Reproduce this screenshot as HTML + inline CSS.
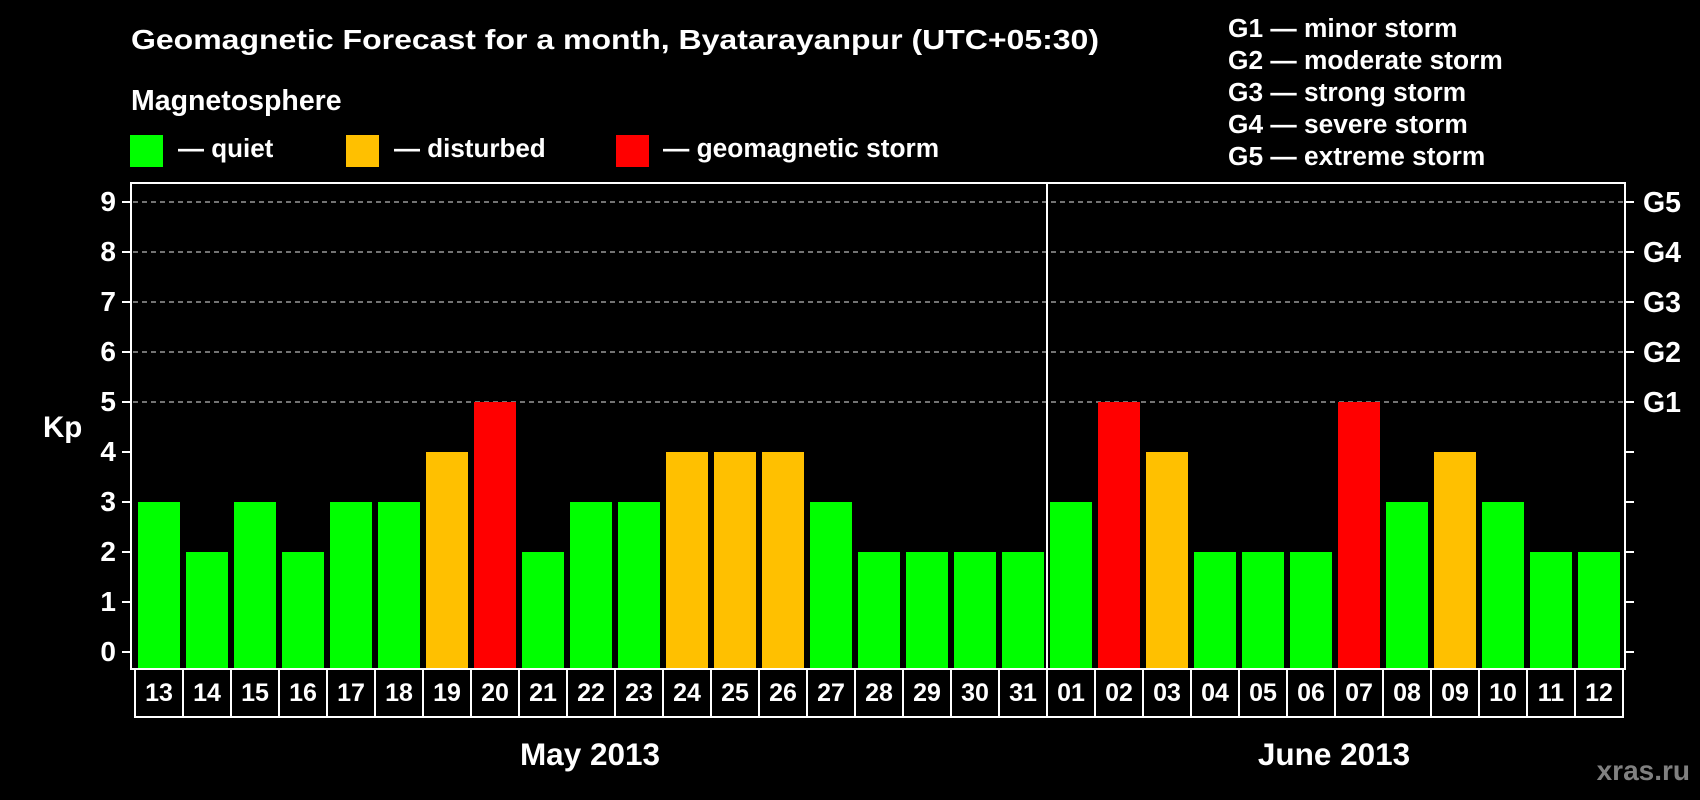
<!DOCTYPE html>
<html><head><meta charset="utf-8"><style>
html,body{margin:0;padding:0;background:#000;width:1700px;height:800px;overflow:hidden}
svg{display:block}
text{font-family:"Liberation Sans",Arial,sans-serif;font-weight:bold;fill:#fff}
</style></head><body>
<svg width="1700" height="800" xmlns="http://www.w3.org/2000/svg">
<rect width="1700" height="800" fill="#000"/>
<text x="131" y="49" font-size="28" textLength="968" lengthAdjust="spacingAndGlyphs">Geomagnetic Forecast for a month, Byatarayanpur (UTC+05:30)</text>
<text x="131" y="110" font-size="28.5">Magnetosphere</text>
<rect x="130" y="135" width="33" height="32" fill="#00ff00"/>
<text x="178" y="157" font-size="26">— quiet</text>
<rect x="346" y="135" width="33" height="32" fill="#ffc000"/>
<text x="394" y="157" font-size="26">— disturbed</text>
<rect x="616" y="135" width="33" height="32" fill="#ff0000"/>
<text x="663" y="157" font-size="26.3">— geomagnetic storm</text>
<g font-size="26.3">
<text x="1228" y="37">G1 — minor storm</text>
<text x="1228" y="69">G2 — moderate storm</text>
<text x="1228" y="101">G3 — strong storm</text>
<text x="1228" y="133">G4 — severe storm</text>
<text x="1228" y="165">G5 — extreme storm</text>
</g>
<g stroke="#999" stroke-width="1.5" stroke-dasharray="5,4">
<line x1="133" y1="202" x2="1624" y2="202"/>
<line x1="133" y1="252" x2="1624" y2="252"/>
<line x1="133" y1="302" x2="1624" y2="302"/>
<line x1="133" y1="352" x2="1624" y2="352"/>
<line x1="133" y1="402" x2="1624" y2="402"/>
</g>
<g>
<rect x="138" y="502" width="42" height="166" fill="#00ff00"/>
<rect x="186" y="552" width="42" height="116" fill="#00ff00"/>
<rect x="234" y="502" width="42" height="166" fill="#00ff00"/>
<rect x="282" y="552" width="42" height="116" fill="#00ff00"/>
<rect x="330" y="502" width="42" height="166" fill="#00ff00"/>
<rect x="378" y="502" width="42" height="166" fill="#00ff00"/>
<rect x="426" y="452" width="42" height="216" fill="#ffc000"/>
<rect x="474" y="402" width="42" height="266" fill="#ff0000"/>
<rect x="522" y="552" width="42" height="116" fill="#00ff00"/>
<rect x="570" y="502" width="42" height="166" fill="#00ff00"/>
<rect x="618" y="502" width="42" height="166" fill="#00ff00"/>
<rect x="666" y="452" width="42" height="216" fill="#ffc000"/>
<rect x="714" y="452" width="42" height="216" fill="#ffc000"/>
<rect x="762" y="452" width="42" height="216" fill="#ffc000"/>
<rect x="810" y="502" width="42" height="166" fill="#00ff00"/>
<rect x="858" y="552" width="42" height="116" fill="#00ff00"/>
<rect x="906" y="552" width="42" height="116" fill="#00ff00"/>
<rect x="954" y="552" width="42" height="116" fill="#00ff00"/>
<rect x="1002" y="552" width="42" height="116" fill="#00ff00"/>
<rect x="1050" y="502" width="42" height="166" fill="#00ff00"/>
<rect x="1098" y="402" width="42" height="266" fill="#ff0000"/>
<rect x="1146" y="452" width="42" height="216" fill="#ffc000"/>
<rect x="1194" y="552" width="42" height="116" fill="#00ff00"/>
<rect x="1242" y="552" width="42" height="116" fill="#00ff00"/>
<rect x="1290" y="552" width="42" height="116" fill="#00ff00"/>
<rect x="1338" y="402" width="42" height="266" fill="#ff0000"/>
<rect x="1386" y="502" width="42" height="166" fill="#00ff00"/>
<rect x="1434" y="452" width="42" height="216" fill="#ffc000"/>
<rect x="1482" y="502" width="42" height="166" fill="#00ff00"/>
<rect x="1530" y="552" width="42" height="116" fill="#00ff00"/>
<rect x="1578" y="552" width="42" height="116" fill="#00ff00"/>
</g>
<g stroke="#fff" stroke-width="2" fill="none">
<rect x="131" y="183" width="1494" height="486"/>
<line x1="1047" y1="183" x2="1047" y2="669"/>
<rect x="135" y="669" width="1488" height="48"/>
<path d="M122 202H131M122 252H131M122 302H131M122 352H131M122 402H131M122 452H131M122 502H131M122 552H131M122 602H131M122 652H131"/>
<path d="M1625 202H1634M1625 252H1634M1625 302H1634M1625 352H1634M1625 402H1634M1625 452H1634M1625 502H1634M1625 552H1634M1625 602H1634M1625 652H1634"/>
<path d="M183 669V717M231 669V717M279 669V717M327 669V717M375 669V717M423 669V717M471 669V717M519 669V717M567 669V717M615 669V717M663 669V717M711 669V717M759 669V717M807 669V717M855 669V717M903 669V717M951 669V717M999 669V717M1047 669V717M1095 669V717M1143 669V717M1191 669V717M1239 669V717M1287 669V717M1335 669V717M1383 669V717M1431 669V717M1479 669V717M1527 669V717M1575 669V717"/>
</g>
<g font-size="28" text-anchor="end">
<text x="116" y="211">9</text><text x="116" y="261">8</text><text x="116" y="311">7</text>
<text x="116" y="361">6</text><text x="116" y="411">5</text><text x="116" y="461">4</text>
<text x="116" y="511">3</text><text x="116" y="561">2</text><text x="116" y="611">1</text>
<text x="116" y="661">0</text>
</g>
<text x="43" y="437" font-size="29.5">Kp</text>
<g font-size="28.5">
<text x="1643" y="212">G5</text><text x="1643" y="262">G4</text><text x="1643" y="312">G3</text>
<text x="1643" y="362">G2</text><text x="1643" y="412">G1</text>
</g>
<g font-size="25" text-anchor="middle">
<text x="159" y="701">13</text><text x="207" y="701">14</text><text x="255" y="701">15</text><text x="303" y="701">16</text>
<text x="351" y="701">17</text><text x="399" y="701">18</text><text x="447" y="701">19</text><text x="495" y="701">20</text>
<text x="543" y="701">21</text><text x="591" y="701">22</text><text x="639" y="701">23</text><text x="687" y="701">24</text>
<text x="735" y="701">25</text><text x="783" y="701">26</text><text x="831" y="701">27</text><text x="879" y="701">28</text>
<text x="927" y="701">29</text><text x="975" y="701">30</text><text x="1023" y="701">31</text><text x="1071" y="701">01</text>
<text x="1119" y="701">02</text><text x="1167" y="701">03</text><text x="1215" y="701">04</text><text x="1263" y="701">05</text>
<text x="1311" y="701">06</text><text x="1359" y="701">07</text><text x="1407" y="701">08</text><text x="1455" y="701">09</text>
<text x="1503" y="701">10</text><text x="1551" y="701">11</text><text x="1599" y="701">12</text>
</g>
<text x="590" y="765" font-size="31.5" text-anchor="middle">May 2013</text>
<text x="1334" y="765" font-size="31.5" text-anchor="middle">June 2013</text>
<text x="1690" y="780" font-size="28" text-anchor="end" style="fill:#808080">xras.ru</text>
</svg>
</body></html>
